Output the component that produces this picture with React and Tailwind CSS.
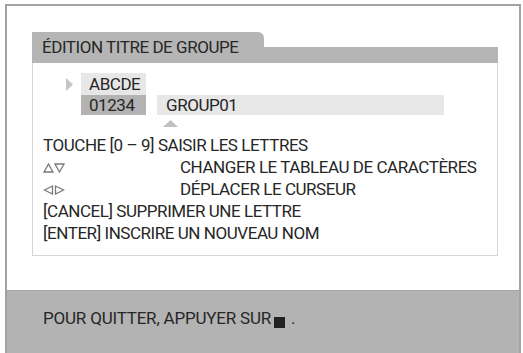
import React from "react";

const font = { fontFamily: "Roboto, 'Liberation Sans', sans-serif" };

function UpDown() {
    return (
        <svg width="22" height="10" viewBox="0 0 22 10">
            <path d="M1 9 L5.5 1 L10 9 Z" fill="none" stroke="#7a7a7a" strokeWidth="1.3" />
            <path d="M12 1 L21 1 L16.5 9 Z" fill="none" stroke="#7a7a7a" strokeWidth="1.3" />
        </svg>
    );
}

function LeftRight() {
    return (
        <svg width="22" height="10" viewBox="0 0 22 10">
            <path d="M9.5 1 L1.5 5 L9.5 9 Z" fill="none" stroke="#7a7a7a" strokeWidth="1.3" />
            <path d="M12.5 1 L20.5 5 L12.5 9 Z" fill="none" stroke="#7a7a7a" strokeWidth="1.3" />
        </svg>
    );
}

export default function App() {
    const lines = [
        { icon: null, text: "TOUCHE [0 – 9] SAISIR LES LETTRES" },
        { icon: <UpDown />, text: "CHANGER LE TABLEAU DE CARACTÈRES" },
        { icon: <LeftRight />, text: "DÉPLACER LE CURSEUR" },
        { icon: null, text: "[CANCEL] SUPPRIMER UNE LETTRE" },
        { icon: null, text: "[ENTER] INSCRIRE UN NOUVEAU NOM" },
    ];

    return (
        <div
            className="w-[523px] h-[353px] bg-white pt-[4px] pl-[5px] pr-[2px] text-[#262626] text-[17px] tracking-[-0.45px] overflow-hidden"
            style={font}
        >
            <div className="h-full border-2 border-b-0 border-[#a3a3a3] flex flex-col">
                <div className="pt-[26px] pl-[25px] pr-[21px] h-[284px]">
                    <div className="flex items-end h-[31px]">
                        <div className="w-[232px] h-[31px] bg-[#b5b5b5] rounded-tr-[6px] flex items-center pl-[10px]">
                            ÉDITION TITRE DE GROUPE
                        </div>
                        <div className="flex-1 h-[16px] bg-[#b5b5b5]"></div>
                    </div>
                    <div className="border border-t-0 border-[#d6d6d6] pt-[10px] pb-[10px] pl-[10px]">
                        <div className="flex h-[22px]">
                            <div className="w-[38px] flex items-center justify-end pr-[8px]">
                                <svg width="7" height="13" viewBox="0 0 7 13">
                                    <path d="M0 0 L7 6.5 L0 13 Z" fill="#c4c4c4" />
                                </svg>
                            </div>
                            <div className="w-[65px] bg-[#e7e7e7] pl-[8px] leading-[22px]">ABCDE</div>
                        </div>
                        <div className="flex h-[20px]">
                            <div className="w-[38px]"></div>
                            <div className="w-[65px] bg-[#b3b3b3] pl-[8px] leading-[20px]">01234</div>
                            <div className="w-[11px]"></div>
                            <div className="w-[287px] bg-[#e7e7e7] pl-[9px] leading-[20px]">GROUP01</div>
                        </div>
                        <div className="h-[20px] pl-[120px] pt-[5px]">
                            <svg width="15" height="7" viewBox="0 0 15 7">
                                <path d="M0 7 L7.5 0 L15 7 Z" fill="#c0c0c0" />
                            </svg>
                        </div>
                        {lines.map((l, i) => (
                            <div key={i} className="flex items-center h-[22px]">
                                {l.icon ? (
                                    <>
                                        <div className="w-[137px] flex items-center">{l.icon}</div>
                                        <span>{l.text}</span>
                                    </>
                                ) : (
                                    <span>{l.text}</span>
                                )}
                            </div>
                        ))}
                    </div>
                </div>
                <div className="flex-1 bg-[#b3b3b3] border-t border-[#a6a6a6] pl-[36px] pt-[17px]">
                    <div className="flex items-center h-[22px] tracking-[-0.2px]">
                        <span>POUR QUITTER, APPUYER SUR</span>
                        <span className="inline-block w-[11px] h-[11px] bg-[#222] ml-[3px] mt-[6px]"></span>
                        <span className="ml-[6px]">.</span>
                    </div>
                </div>
            </div>
        </div>
    );
}
